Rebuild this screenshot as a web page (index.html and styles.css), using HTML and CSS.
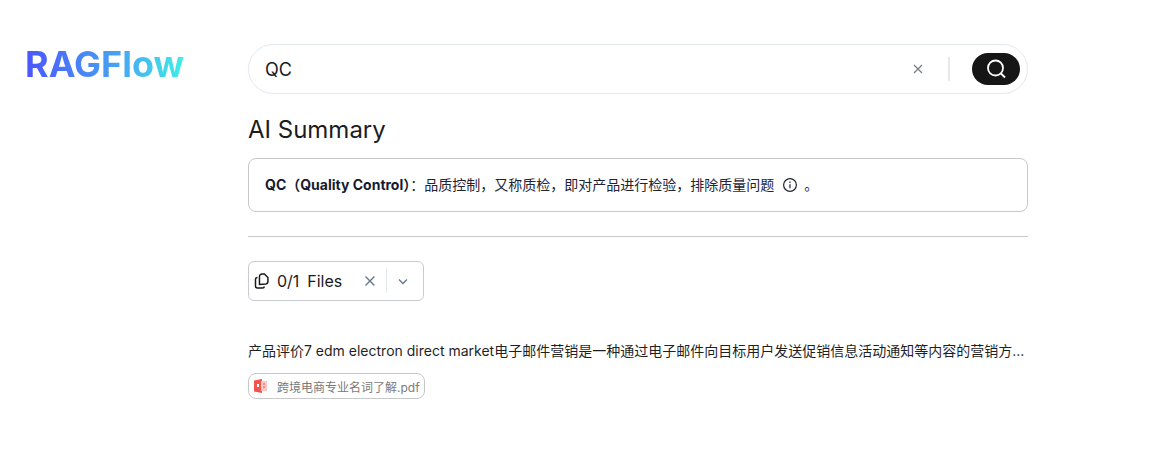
FILE: index.html
```html
<!DOCTYPE html>
<html>
<head>
    <title>RAGFlow Search</title>
    <link rel="stylesheet" href="styles.css">
</head>
<body>
    <div class="page">
        <div class="logo">RAGFlow</div>
        <div class="main">
            <div class="search-bar">
                <span class="search-text">QC</span>
                <svg class="clear-icon" width="16" height="16" viewBox="0 0 16 16" fill="none" stroke="#73787f" stroke-width="1.100"><path d="M4 4l8 8M12 4l-8 8"/></svg>
                <span class="search-divider"></span>
                <button class="search-btn">
                    <svg width="22" height="22" viewBox="0 0 22 22" fill="none" stroke="#fff" stroke-width="1.800"><circle cx="10.500" cy="10" r="7.500"/><path d="M16 15.500l4 4"/></svg>
                </button>
            </div>
            <h2 class="summary-title">AI Summary</h2>
            <div class="summary-box">
                <p class="summary-text"><strong>QC（Quality Control）</strong>：品质控制，又称质检，即对产品进行检验，排除质量问题<svg class="info-icon" width="16" height="16" viewBox="0 0 16 16" fill="none" stroke="#1f2430" stroke-width="1.200"><circle cx="8" cy="8" r="6.400"/><path d="M8 7.200v4M8 4.600v1.300"/></svg>。</p>
            </div>
            <hr class="divider">
            <div class="file-select">
                <svg class="copy-icon" width="16" height="16" viewBox="0 0 16 16" fill="none" stroke="#1a1a1a" stroke-width="1.500"><path d="M5.500 11.500V3.500a2.500 2.500 0 0 1 2.500-2.500h2.500l3.500 3.500v4.500a2.500 2.500 0 0 1-2 2z"/><path d="M3.500 4.500A2 2 0 0 0 1.500 6.500v6.500a2 2 0 0 0 2 2h5A2 2 0 0 0 10.500 13.500"/></svg>
                <span class="file-count">0/1</span>
                <span class="file-label">Files</span>
                <svg class="file-x" width="16" height="16" viewBox="0 0 16 16" fill="none" stroke="#64748b" stroke-width="1.300"><path d="M3.500 3.500l9 9M12.500 3.500l-9 9"/></svg>
                <span class="file-divider"></span>
                <svg class="file-chev" width="16" height="16" viewBox="0 0 16 16" fill="none" stroke="#64748b" stroke-width="1.300"><path d="M4 6.500l4 4 4-4"/></svg>
            </div>
            <div class="result">
                <p class="result-text">产品评价7 edm electron direct market电子邮件营销是一种通过电子邮件向目标用户发送促销信息活动通知等内容的营销方...</p>
                <div class="doc-tag">
                    <svg width="14" height="16" viewBox="0 0 14 16"><path d="M0 2.500L8 1v14L0 13.500z" fill="#f4524d"/><rect x="7" y="3" width="6" height="10" fill="#fbc9c5"/><path d="M3 6h2v3H3z" fill="#fff"/><path d="M9 6h2M9 9h2" stroke="#f4524d"/></svg>
                    <span>跨境电商专业名词了解.pdf</span>
                </div>
            </div>
        </div>
    </div>
</body>
</html>
```

FILE: styles.css
```css
* {
    box-sizing: border-box;
}
body {
    margin: 0;
    background: #fff;
    font-family: Inter, "Noto Sans CJK SC", sans-serif;
    color: #161616;
}
.page {
    display: flex;
    padding: 44px 0 0 25px;
}
.logo {
    width: 223px;
    font-size: 36px;
    font-weight: 700;
    line-height: 40px;
    height: 40px;
    background: linear-gradient(90deg, #4b55ff 0%, #47a5f2 60%, #3fefe6 100%);
    background-size: 159px 100%;
    background-repeat: no-repeat;
    -webkit-background-clip: text;
    background-clip: text;
    color: transparent;
}
.main {
    width: 780px;
}
.search-bar {
    display: flex;
    align-items: center;
    height: 50px;
    border: 1px solid #e2e8f0;
    border-radius: 25px;
    padding: 0 7px 0 16px;
}
.search-text {
    flex: 1;
    font-size: 18px;
    color: #161b26;
}
.clear-icon {
    margin-right: 22px;
}
.search-divider {
    width: 2px;
    height: 24px;
    background: #e5e7eb;
    margin-right: 22px;
}
.search-btn {
    width: 48px;
    height: 32px;
    border: none;
    border-radius: 16px;
    background: #161616;
    padding: 0;
    display: flex;
    align-items: center;
    justify-content: center;
}
.summary-title {
    margin: 21px 0 0;
    font-size: 24px;
    font-weight: 400;
    line-height: 30px;
    color: #1c1c1c;
}
.summary-box {
    margin-top: 13px;
    height: 54px;
    border: 1px solid #c8c8c8;
    border-radius: 8px;
    padding: 0 16px;
    display: flex;
    align-items: center;
}
.summary-text {
    margin: 0;
    font-size: 14px;
    line-height: 20px;
    color: #1d2433;
    white-space: nowrap;
}
.summary-text strong {
    font-weight: 700;
    color: #161b2e;
}
.info-icon {
    margin: 0 6px 0 8px;
    vertical-align: -3px;
}
.divider {
    margin: 24px 0;
    border: none;
    border-top: 1px solid #c8c8c8;
}
.file-select {
    display: flex;
    align-items: center;
    width: 176px;
    height: 40px;
    border: 1px solid #c8ccd2;
    border-radius: 6px;
    padding: 0 12px 0 5px;
    font-size: 16px;
    color: #1a1a1a;
}
.file-count {
    margin-left: 7px;
}
.file-label {
    margin-left: 8px;
}
.file-x {
    margin-left: 20px;
}
.file-divider {
    width: 1px;
    height: 24px;
    background: #e2e8f0;
    margin: 0 8px;
}
.result {
    margin-top: 40px;
}
.result-text {
    margin: 0;
    font-size: 14px;
    line-height: 20px;
    color: #1f1f1f;
    white-space: nowrap;
}
.doc-tag {
    display: inline-flex;
    align-items: center;
    gap: 9px;
    margin-top: 12px;
    height: 26px;
    padding: 0 4px 0 5px;
    border: 1px solid #c8c8c8;
    border-radius: 8px;
    font-size: 12px;
    color: #7a7a7a;
}
```
